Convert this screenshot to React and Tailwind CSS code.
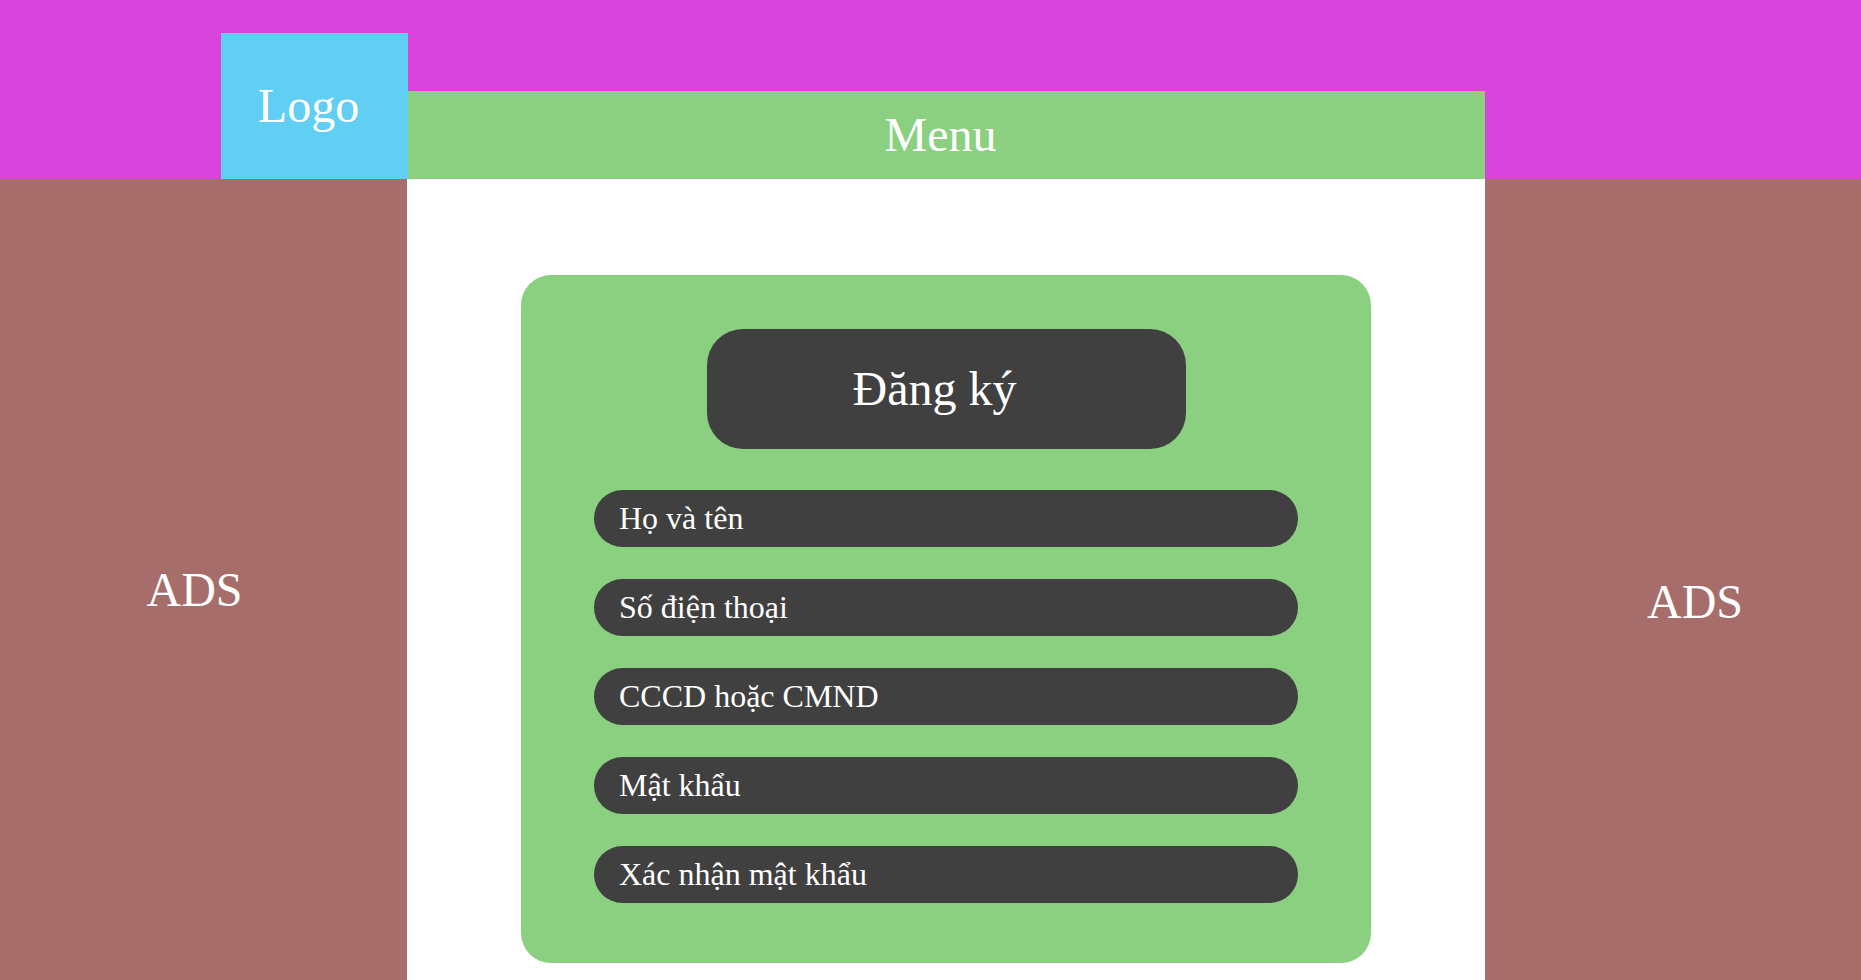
import React from 'react';

const fields = ['Họ và tên', 'Số điện thoại', 'CCCD hoặc CMND', 'Mật khẩu', 'Xác nhận mật khẩu'];

export default function App() {
  return (
    <div className="w-[1861px] h-[980px] overflow-hidden bg-white text-white font-['Liberation_Serif',serif]">
      <header className="flex h-[179px] bg-[#d843db] pl-[221px]">
        <div className="w-[187px] h-[146px] self-end flex items-center justify-center pr-[12px] bg-[#61cef3] text-[48px] leading-none">
          Logo
        </div>
        <nav className="w-[1077px] h-[88px] self-end flex items-center justify-center pr-[12px] bg-[#8bcf80] text-[48px] leading-none">
          Menu
        </nav>
      </header>

      <div className="flex h-[801px]">
        <aside className="w-[407px] flex items-center justify-center pr-[18px] pt-[21px] bg-[#a66d6b] text-[48px] leading-none">
          ADS
        </aside>

        <main className="w-[1078px] flex justify-center pt-[96px] bg-white">
          <section className="w-[850px] h-[688px] rounded-[30px] bg-[#8bcf80] flex flex-col items-center pt-[54px]">
            <h1 className="w-[479px] h-[120px] rounded-[36px] bg-[#404040] flex items-center justify-center pr-[23px] text-[48px] font-normal leading-none">
              Đăng ký
            </h1>
            <div className="mt-[41px] flex flex-col gap-[32px]">
              {fields.map((label) => (
                <div key={label} className="w-[704px] h-[57px] rounded-full bg-[#404040] flex items-center pl-[25px] pb-[2px] text-[32px] leading-none">
                  {label}
                </div>
              ))}
            </div>
          </section>
        </main>

        <aside className="flex-1 flex items-center justify-center pl-[44px] pt-[45px] bg-[#a66d6b] text-[48px] leading-none">
          ADS
        </aside>
      </div>
    </div>
  );
}
